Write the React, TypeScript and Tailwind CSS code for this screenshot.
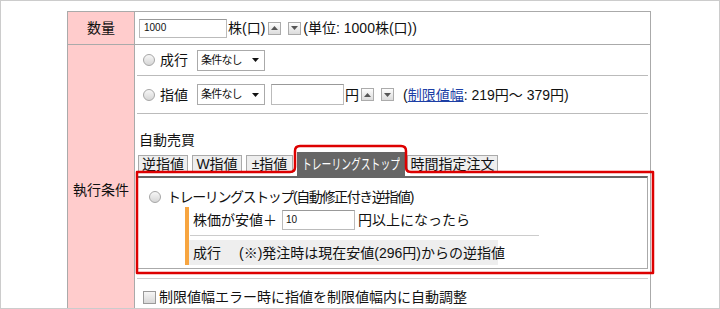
import React from "react";

function Radio() {
  return (
    <span className="inline-block w-[12px] h-[12px] shrink-0 rounded-full border border-[#a6a6a6] bg-linear-to-b from-[#f7f7f7] to-[#d6d6d6]" />
  );
}

function Spin({ dir }: { dir: "up" | "down" }) {
  return (
    <span className="inline-flex items-center justify-center w-[13px] h-[13px] shrink-0 border border-[#ababab] bg-linear-to-b from-[#fdfdfd] to-[#dcdcdc]">
      <svg width="7" height="4" viewBox="0 0 7 4">
        {dir === "up" ? (
          <path d="M0 4 L3.5 0 L7 4 Z" fill="#555" />
        ) : (
          <path d="M0 0 L7 0 L3.5 4 Z" fill="#555" />
        )}
      </svg>
    </span>
  );
}

function Select() {
  return (
    <span className="inline-flex items-center justify-between w-[68px] h-[21px] shrink-0 border border-[#aaaaaa] bg-white pl-[3px] pr-[5px] text-[11px] leading-none">
      <span className="tracking-[-0.8px]">条件なし</span>
      <svg width="7" height="4" viewBox="0 0 7 4">
        <path d="M0 0 L7 0 L3.5 4 Z" fill="#111" />
      </svg>
    </span>
  );
}

function Tab({ label, w, ml }: { label: string; w: string; ml: string }) {
  return (
    <div
      className={`${w} ${ml} h-[18px] mb-[3px] shrink-0 border border-[#aaaaaa] bg-[#eeeeee] flex items-center justify-center text-[14px] leading-none whitespace-nowrap`}
    >
      {label}
    </div>
  );
}

export default function App() {
  return (
    <div className="relative w-[720px] h-[309px] overflow-hidden bg-white border border-[#cccccc] text-[14px] leading-[18px] text-[#111] font-['Liberation_Sans','Noto_Sans_CJK_JP',sans-serif]">
      <div className="ml-[66px] mt-[10px] w-[584px] border-x border-t border-[#aaaaaa]">
        {/* 数量 row */}
        <div className="flex h-[33px] border-b border-[#aaaaaa]">
          <div className="w-[67px] shrink-0 border-r border-[#aaaaaa] bg-[#ffcccc] flex items-center justify-center">
            数量
          </div>
          <div className="flex items-center pl-[4px]">
            <span className="w-[88px] h-[19px] border border-[#bbbbbb] border-t-[#999999] text-[10px] pl-[4px] flex items-center">
              1000
            </span>
            <span className="ml-[1px]">株(口)</span>
            <span className="ml-[3px] flex gap-[7px]">
              <Spin dir="up" />
              <Spin dir="down" />
            </span>
            <span className="ml-[2px]">(単位: 1000株(口))</span>
          </div>
        </div>

        {/* 執行条件 row */}
        <div className="flex">
          <div className="w-[67px] shrink-0 border-r border-[#aaaaaa] bg-[#ffcccc] flex justify-center pt-[136px]">
            執行条件
          </div>
          <div className="flex-1 pb-[20px]">
            <div className="mx-[2px] h-[31px] border-b border-[#bbbbbb] flex items-center pl-[6px]">
              <Radio />
              <span className="ml-[5px]">成行</span>
              <span className="ml-[9px] flex">
                <Select />
              </span>
            </div>
            <div className="mx-[2px] h-[38px] border-b border-[#bbbbbb] flex items-center pl-[6px]">
              <Radio />
              <span className="ml-[5px]">指値</span>
              <span className="ml-[9px] flex">
                <Select />
              </span>
              <span className="ml-[6px] w-[73px] h-[21px] border border-[#bbbbbb] border-t-[#999999]" />
              <span className="ml-[1px]">円</span>
              <span className="ml-[2px] flex gap-[7px]">
                <Spin dir="up" />
                <Spin dir="down" />
              </span>
              <span className="ml-[9px]">
                (<span className="text-[#1d3fa5] underline">制限値幅</span>: 219円～ 379円)
              </span>
            </div>

            {/* 自動売買 */}
            <div className="mx-[2px] pt-[17px]">
              <div className="pl-[2px] h-[18px]">自動売買</div>
              <div className="flex items-end h-[27px] pl-[1px]">
                <Tab label="逆指値" w="w-[50px]" ml="ml-0" />
                <Tab label="W指値" w="w-[50px]" ml="ml-[4px]" />
                <Tab label="±指値" w="w-[47px]" ml="ml-[4px]" />
                <div className="ml-[4px] w-[108px] h-[24px] shrink-0 bg-[#666666] text-white flex items-center justify-center overflow-visible whitespace-nowrap">
                  <span className="inline-block text-[14px] leading-none scale-x-[0.7]">
                    トレーリングストップ
                  </span>
                </div>
                <Tab label="時間指定注文" w="w-[91px]" ml="ml-[2px]" />
              </div>
              <div className="h-[93px] border-t-2 border-t-[#666666] border-x border-b border-x-[#aaaaaa] border-b-[#aaaaaa]">
                <div className="mt-[11px] h-[16px] flex items-center pl-[11px]">
                  <Radio />
                  <span className="ml-[6px] tracking-[-1.4px] whitespace-nowrap">
                    トレーリングストップ(自動修正付き逆指値)
                  </span>
                </div>
                <div className="mt-[2px] ml-[47px] flex">
                  <div className="w-[4px] shrink-0 bg-[#f7a540]" />
                  <div className="flex flex-col">
                    <div className="h-[26px] flex items-center pl-[4px]">
                      <span>株価が安値＋</span>
                      <span className="ml-[5px] w-[73px] h-[20px] border border-[#bbbbbb] border-t-[#999999] text-[10px] pl-[3px] flex items-center">
                        10
                      </span>
                      <span className="ml-[3px]">円以上になったら</span>
                    </div>
                    <div className="mt-[2px] ml-px w-[349px] h-px bg-[#cccccc]" />
                    <div className="mt-[4px] h-[25px] w-[309px] bg-[#eeeeee] flex items-center pl-[4px] whitespace-nowrap">
                      <span>成行</span>
                      <span className="ml-[18px]">(※)発注時は現在安値(296円)からの逆指値</span>
                    </div>
                  </div>
                </div>
              </div>
            </div>

            <div className="mx-[2px] mt-[9px] border-t border-[#cccccc] pt-[9px] flex items-center pl-[6px]">
              <span className="inline-block w-[13px] h-[13px] shrink-0 border border-[#9a9a9a] bg-linear-to-b from-[#f6f6f6] to-[#d8d8d8]" />
              <span className="ml-[3px] whitespace-nowrap">制限値幅エラー時に指値を制限値幅内に自動調整</span>
            </div>
          </div>
        </div>
      </div>

      <svg
        className="absolute left-[-1px] top-[-1px] pointer-events-none"
        width="720"
        height="309"
        viewBox="0 0 720 309"
      >
        <path
          d="M137 172 H290 Q295 172 295 167 V151 Q295 146 300 146 H401 Q406 146 406 151 V167 Q406 172 411 172 H653 V273 H137 Z"
          fill="none"
          stroke="#dd0000"
          strokeWidth="2.5"
          strokeLinejoin="round"
        />
      </svg>
    </div>
  );
}
